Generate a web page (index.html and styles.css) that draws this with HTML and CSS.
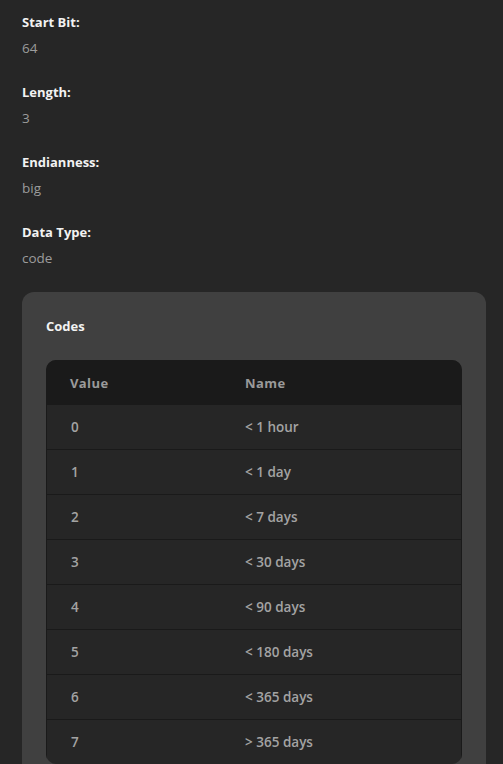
FILE: index.html
```html
<!DOCTYPE html>
<html>
<head>
<meta charset="utf-8">
<link rel="stylesheet" href="styles.css">
</head>
<body>
<div class="page">
  <div class="field"><div class="label">Start Bit:</div><div class="value">64</div></div>
  <div class="field"><div class="label">Length:</div><div class="value">3</div></div>
  <div class="field"><div class="label">Endianness:</div><div class="value">big</div></div>
  <div class="field"><div class="label">Data Type:</div><div class="value">code</div></div>
  <div class="card">
    <div class="card-title">Codes</div>
    <table class="codes">
      <thead><tr><th class="col-value">Value</th><th>Name</th></tr></thead>
      <tbody>
        <tr><td>0</td><td>&lt; 1 hour</td></tr>
        <tr><td>1</td><td>&lt; 1 day</td></tr>
        <tr><td>2</td><td>&lt; 7 days</td></tr>
        <tr><td>3</td><td>&lt; 30 days</td></tr>
        <tr><td>4</td><td>&lt; 90 days</td></tr>
        <tr><td>5</td><td>&lt; 180 days</td></tr>
        <tr><td>6</td><td>&lt; 365 days</td></tr>
        <tr><td>7</td><td>&gt; 365 days</td></tr>
      </tbody>
    </table>
  </div>
</div>
</body>
</html>
```
FILE: styles.css
```css
html, body {
  margin: 0;
  padding: 0;
  background: #262626;
}
body {
  font-family: "Open Sans", "Noto Sans", sans-serif;
  font-size: 13px;
}
.page {
  padding: 13px 17px 20px 22px;
}
.field {
  margin-bottom: 26px;
}
.field:nth-child(4) {
  margin-bottom: 25px;
}
.label {
  font-weight: 700;
  color: #f2f2f2;
  line-height: 18px;
  margin-bottom: 8px;
}
.value {
  color: #9c9c9c;
  font-size: 13.5px;
  line-height: 18px;
}
.card {
  background: #404040;
  border-radius: 12px;
  padding: 25px 24px 24px;
}
.card-title {
  color: #f2f2f2;
  font-weight: 700;
  line-height: 18px;
  margin-bottom: 25px;
}
.codes {
  width: 100%;
  border-collapse: separate;
  border-spacing: 0;
  border-radius: 10px;
  overflow: hidden;
  background: #262626;
}
.codes th {
  background: #1a1a1a;
  color: #9a9a9a;
  font-weight: 700;
  letter-spacing: 0.4px;
  text-align: left;
  height: 45px;
  padding: 0 24px;
}
.codes th.col-value {
  width: 127px;
}
.codes td {
  color: #a3a3a3;
  font-size: 13.5px;
  font-weight: 600;
  height: 44px;
  padding: 0 24px;
  border-top: 1px solid #1a1a1a;
}
.codes tbody tr:first-child td {
  border-top: none;
}
.codes tbody td:first-child {
  border-left: 1px solid #1a1a1a;
}
.codes tbody td:last-child {
  border-right: 1px solid #1a1a1a;
}
```
